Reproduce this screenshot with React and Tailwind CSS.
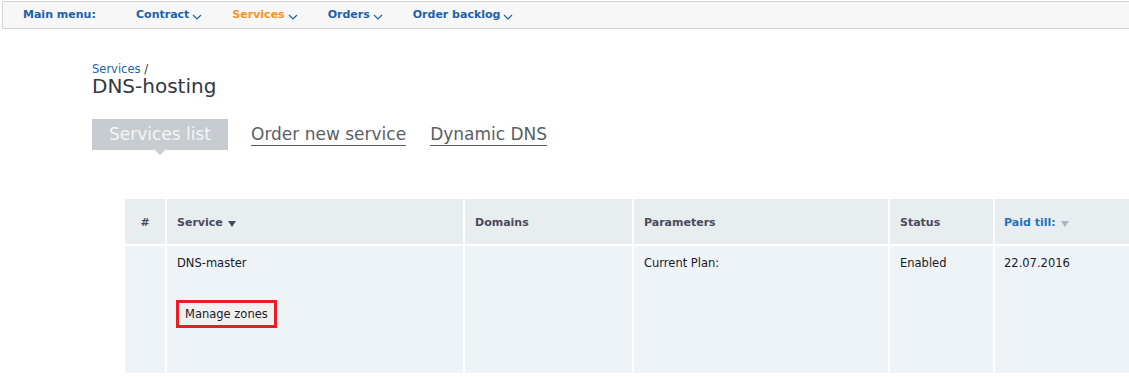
import React from "react";

const Chevron = ({ className = "" }) => (
  <svg width="10" height="6" viewBox="0 0 10 6" className={className}>
    <path d="M1 1 L5 5 L9 1" fill="none" stroke="currentColor" strokeWidth="1.2" />
  </svg>
);

const NavItem = ({ label, active }) => (
  <div
    className={`flex items-center gap-[3px] font-bold text-[11px] ${
      active ? "text-[#f7941d]" : "text-[#1d62a8]"
    }`}
  >
    <span>{label}</span>
    <Chevron className={active ? "text-[#1d62a8] mt-[2px]" : "mt-[2px]"} />
  </div>
);

export default function App() {
  return (
    <div
      className="w-[1129px] h-[377px] bg-white overflow-hidden"
      style={{ fontFamily: '"DejaVu Sans", Verdana, sans-serif' }}
    >
      <div className="pt-[1px] pl-[2px]">
        <div className="h-[28px] bg-[#f7f7f7] border-t border-b border-l border-[#d2d2d2] flex items-center pl-[20px] pt-[1px]">
          <div className="font-bold text-[11px] text-[#1d62a8] w-[113px]">Main menu:</div>
          <div className="flex items-center gap-[30px]">
            <NavItem label="Contract" />
            <NavItem label="Services" active />
            <NavItem label="Orders" />
            <NavItem label="Order backlog" />
          </div>
        </div>
      </div>

      <div className="pl-[92px] pt-[32px]">
        <div className="text-[11.5px] text-[#1d62a8] leading-[14px] mt-[1px]">
          Services <span className="text-[#333]">/</span>
        </div>
        <div className="text-[20px] text-[#333740] leading-[24px] mt-[-2px]">DNS-hosting</div>

        <div className="flex items-start mt-[21px]">
          <div className="relative h-[31px] w-[136px] bg-[#c6ccd0] flex items-center justify-center text-[17px] text-[#f4f6f7]">
            Services list
            <div className="absolute left-[63px] top-[31px] w-0 h-0 border-l-[5px] border-r-[5px] border-t-[5px] border-l-transparent border-r-transparent border-t-[#c6ccd0]" />
          </div>
          <div className="ml-[23px] h-[31px] flex items-center">
            <span className="text-[17px] text-[#5a5e66] border-b border-[#5a5e66] leading-[21px] mt-[1px]">
              Order new service
            </span>
          </div>
          <div className="ml-[24px] h-[31px] flex items-center">
            <span className="text-[17px] text-[#5a5e66] border-b border-[#5a5e66] leading-[21px] mt-[1px]">
              Dynamic DNS
            </span>
          </div>
        </div>
      </div>

      <div className="pl-[125px] mt-[49px]">
        <div className="grid grid-cols-[40px_296px_167px_254px_103px_136px] gap-[2px] text-[11px]">
          <div className="h-[45px] bg-[#e8edf0] flex items-center justify-center pt-[4px] font-bold text-[#474b5c]">#</div>
          <div className="h-[45px] bg-[#e8edf0] flex items-center pt-[4px] pl-[10px] font-bold text-[#474b5c] gap-[5px]">
            Service
            <svg width="8" height="6" viewBox="0 0 8 6"><path d="M0 0 L8 0 L4 6 Z" fill="#474b5c" /></svg>
          </div>
          <div className="h-[45px] bg-[#e8edf0] flex items-center pt-[4px] pl-[10px] font-bold text-[#474b5c]">Domains</div>
          <div className="h-[45px] bg-[#e8edf0] flex items-center pt-[4px] pl-[10px] font-bold text-[#474b5c]">Parameters</div>
          <div className="h-[45px] bg-[#e8edf0] flex items-center pt-[4px] pl-[10px] font-bold text-[#474b5c]">Status</div>
          <div className="h-[45px] bg-[#e8edf0] flex items-center pt-[4px] pl-[9px] font-bold text-[#1f74c0] gap-[5px]">
            Paid till:
            <svg width="8" height="6" viewBox="0 0 8 6"><path d="M0 0 L8 0 L4 6 Z" fill="#a9b5bc" /></svg>
          </div>

          <div className="h-[127px] bg-[#eef3f7]" />
          <div className="h-[127px] bg-[#eef3f7] pl-[10px] pt-[10px] text-[11.5px] text-[#1a1a28]">
            <div className="leading-[14px]">DNS-master</div>
            <div className="mt-[30px] inline-block border-[3px] border-[#ed1c24] ml-[-1px]">
              <div className="bg-[#f0f0f0] px-[6px] py-[3px] leading-[16px] text-[#1a1a28]">Manage zones</div>
            </div>
          </div>
          <div className="h-[127px] bg-[#eef3f7]" />
          <div className="h-[127px] bg-[#eef3f7] pl-[10px] pt-[10px] text-[11.5px] text-[#1a1a28] leading-[14px]">Current Plan:</div>
          <div className="h-[127px] bg-[#eef3f7] pl-[10px] pt-[10px] text-[11.5px] text-[#1a1a28] leading-[14px]">Enabled</div>
          <div className="h-[127px] bg-[#eef3f7] pl-[9px] pt-[10px] text-[11.5px] text-[#1a1a28] leading-[14px]">22.07.2016</div>
        </div>
      </div>
    </div>
  );
}
